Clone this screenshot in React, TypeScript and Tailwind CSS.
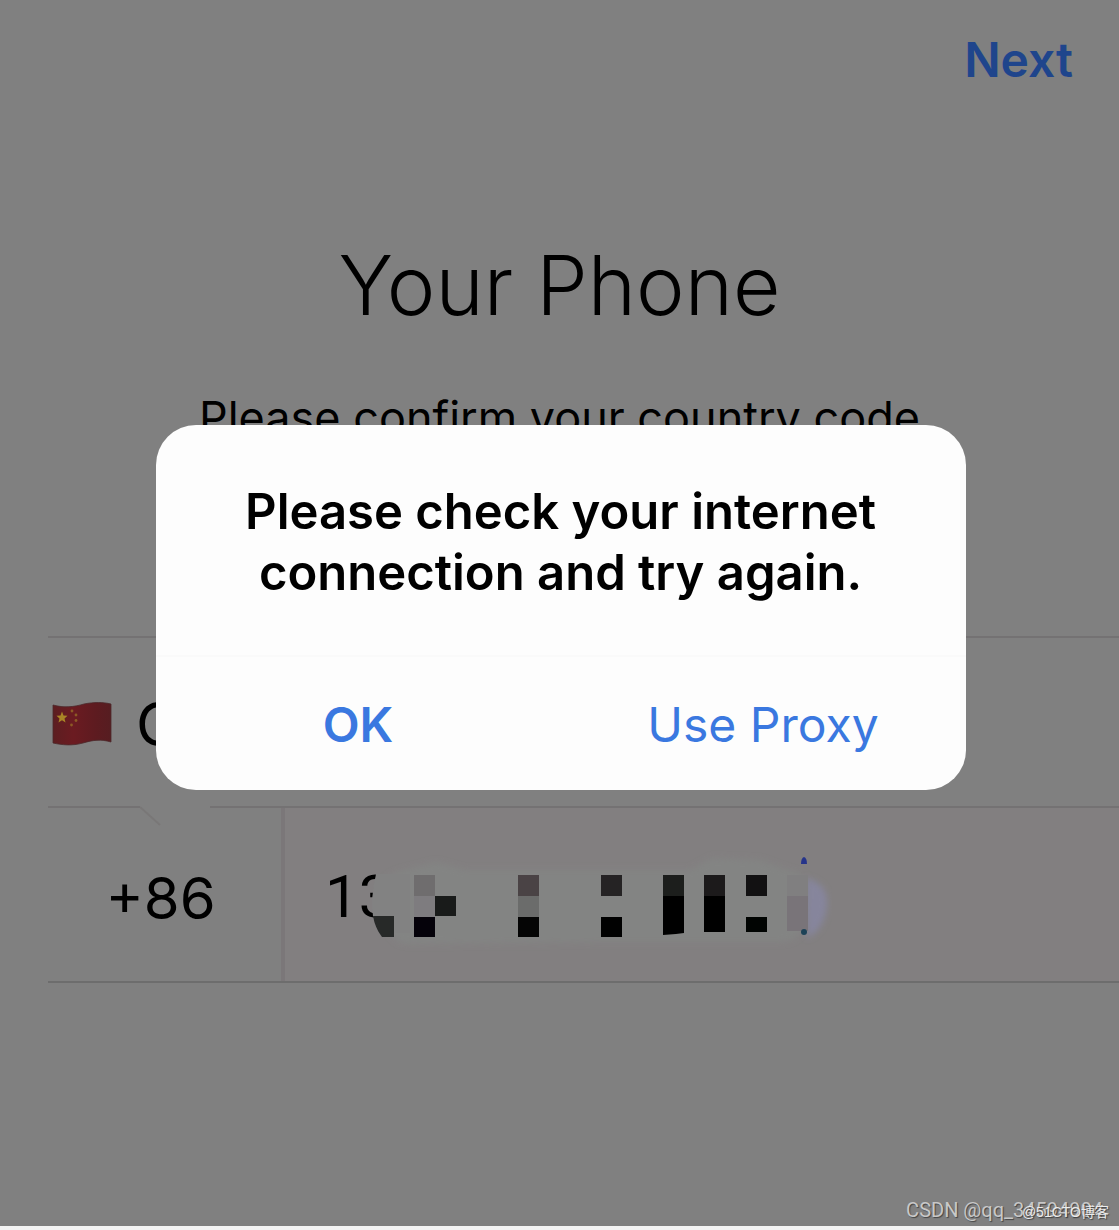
import { useState } from 'react'

function ChinaFlag() {
  return (
    <svg viewBox="0 0 60 44" className="h-11 w-15 shrink-0" aria-hidden="true">
      <defs>
        <linearGradient id="flag" x1="0" x2="1" y1="0" y2="0">
          <stop offset="0" stopColor="#5c1e21" />
          <stop offset="0.35" stopColor="#6b1b21" />
          <stop offset="0.75" stopColor="#5d1b20" />
          <stop offset="1" stopColor="#561d21" />
        </linearGradient>
      </defs>
      <path
        d="M1 3C12 6 22 5 32 2C42 0 51 0 59 2V40C49 37 41 38 31 41C20 44 10 43 1 41Z"
        fill="url(#flag)"
        stroke="#4b2a2c"
        strokeWidth="0.8"
      />
      <path
        d="M10 9.500L11.500 13.500L15.500 13.800L12.500 16.500L13.500 20.500L10 18.300L6.500 20.500L7.500 16.500L4.500 13.800L8.500 13.500Z"
        fill="#a98526"
      />
      <g fill="#8d5a25">
        <circle cx="20" cy="9" r="1.400" />
        <circle cx="24" cy="13" r="1.400" />
        <circle cx="24" cy="18.500" r="1.400" />
        <circle cx="19.500" cy="23" r="1.400" />
      </g>
    </svg>
  )
}

// pixelated cover over the hidden digits of the number
function NumberMask() {
  return (
    <svg viewBox="0 0 500 110" className="h-[110px] w-[500px]" aria-hidden="true">
      <defs>
        <filter id="soft" x="-20%" y="-20%" width="140%" height="140%">
          <feGaussianBlur stdDeviation="3" />
        </filter>
      </defs>
      <path
        d="M40 46Q42 24 66 20L96 12L125 20H350L372 8L420 10L448 20Q478 26 470 56Q466 92 440 92H260L70 94Q46 96 40 46Z"
        fill="#838483"
        filter="url(#soft)"
      />
      <path d="M36 24H70V83H48L33 66Q30 50 36 24Z" fill="#828282" />
      <path d="M466 28Q489 34 487 56Q484 80 467 88Z" fill="#86859c" filter="url(#soft)" />
      <path d="M33 66H54V87H42Q35 78 33 66Z" fill="#272928" />
      <rect x="74" y="25" width="21" height="21" fill="#6f6d6e" />
      <rect x="74" y="46" width="21" height="21" fill="#7e7c7f" />
      <rect x="95" y="46" width="21" height="20" fill="#191b1a" />
      <rect x="74" y="67" width="21" height="20" fill="#05020a" />
      <rect x="178" y="25" width="21" height="21" fill="#4a4345" />
      <rect x="178" y="46" width="21" height="21" fill="#6b6c6b" />
      <rect x="178" y="67" width="21" height="20" fill="#050505" />
      <rect x="261" y="25" width="21" height="21" fill="#252324" />
      <rect x="261" y="67" width="21" height="20" fill="#010101" />
      <rect x="323" y="25" width="21" height="21" fill="#1c1e1c" />
      <path d="M323 46H344V83L336 84L323 85Z" fill="#000" />
      <rect x="364" y="25" width="21" height="21" fill="#1c1a1b" />
      <rect x="364" y="46" width="21" height="36" fill="#000" />
      <rect x="406" y="25" width="21" height="21" fill="#121112" />
      <rect x="406" y="67" width="21" height="15" fill="#010402" />
      <rect x="447" y="25" width="21" height="21" fill="#807f80" />
      <rect x="447" y="46" width="21" height="35" fill="#797479" />
      <path d="M461 14Q461 8 464 7Q467 8 467 14Z" fill="#26348a" />
      <circle cx="464" cy="82" r="3" fill="#1d4257" />
    </svg>
  )
}

export default function App() {
  const [phone, setPhone] = useState('13')

  return (
    <div className="relative flex min-h-screen flex-col border-b-4 border-[#f4f4f4] bg-[#808080] font-['Inter',sans-serif] text-black">
      <header className="flex justify-end px-[46px] pt-7">
        <button type="button" className="text-[48px] leading-16 font-semibold text-[#1f458c]">
          Next
        </button>
      </header>

      <main className="pt-36">
        <h1 className="text-center text-[82px] leading-[100px] font-light">Your Phone</h1>
        <p className="h-[300px] pt-[58px] text-center text-[45px] leading-12">
          Please confirm your country code
        </p>

        <form className="ml-12">
          <div className="relative">
            <button
              type="button"
              className="flex h-[172px] w-full items-center gap-6 border-y-2 border-[#747273] pt-1 pl-1 text-left text-[60px]"
            >
              <ChinaFlag />
              <span>China</span>
            </button>
            {/* notch in the divider, pointing at the country code */}
            <svg
              viewBox="0 0 70 24"
              className="absolute top-[168px] left-[92px] h-6 w-[70px]"
              aria-hidden="true"
            >
              <path d="M0 0H70V5H0Z" fill="#808080" />
              <path d="M0 3L20 21" fill="none" stroke="#797777" strokeWidth="2" />
            </svg>
          </div>
          <div className="flex h-[175px] border-b-2 border-[#6d6d6d]">
            <label
              htmlFor="phone"
              className="flex w-[237px] shrink-0 items-center justify-center border-r-4 border-[#7b7779] pt-2 pr-2 text-[58px]"
            >
              +86
            </label>
            <div className="relative flex-1 bg-[#827f80]">
              <input
                id="phone"
                type="tel"
                value={phone}
                onChange={(e) => setPhone(e.target.value)}
                className="h-full w-full bg-transparent pt-1 pl-10 font-['Roboto',sans-serif] text-[60px] outline-none"
              />
              <div className="pointer-events-none absolute top-[42px] left-[55px]">
                <NumberMask />
              </div>
            </div>
          </div>
        </form>
      </main>

      <div className="absolute inset-0 flex items-center justify-center pb-3 pl-0.5">
        <div
          role="alertdialog"
          aria-labelledby="alert-title"
          className="w-full max-w-[810px] overflow-hidden rounded-[40px] bg-[#fdfdfd]"
        >
          <h2
            id="alert-title"
            className="px-20 pt-14 pb-13 text-center text-[49px] leading-[61px] font-semibold"
          >
            Please check your internet
            <br />
            connection and try again.
          </h2>
          <div className="grid grid-cols-2 border-t-2 border-[#fafafa] text-[48px] text-[#3a78e0]">
            <button type="button" className="h-[133px] pt-1 font-semibold">
              OK
            </button>
            <button type="button" className="h-[133px] pt-1">
              Use Proxy
            </button>
          </div>
        </div>
      </div>

      <div className="pointer-events-none absolute right-4 bottom-0">
        <span className="font-['Roboto',sans-serif] text-[20px] leading-8 text-[#c8c8c8] [text-shadow:1px_1px_1px_#444]">
          CSDN @qq_34594904
        </span>
        <span className="absolute -right-1.5 bottom-0.5 font-['Liberation_Sans','Noto_Sans_CJK_SC',sans-serif] text-[14px] leading-6 whitespace-nowrap text-[#ececec] [text-shadow:1px_1px_1px_#444]">
          @51CTO博客
        </span>
      </div>
    </div>
  )
}
